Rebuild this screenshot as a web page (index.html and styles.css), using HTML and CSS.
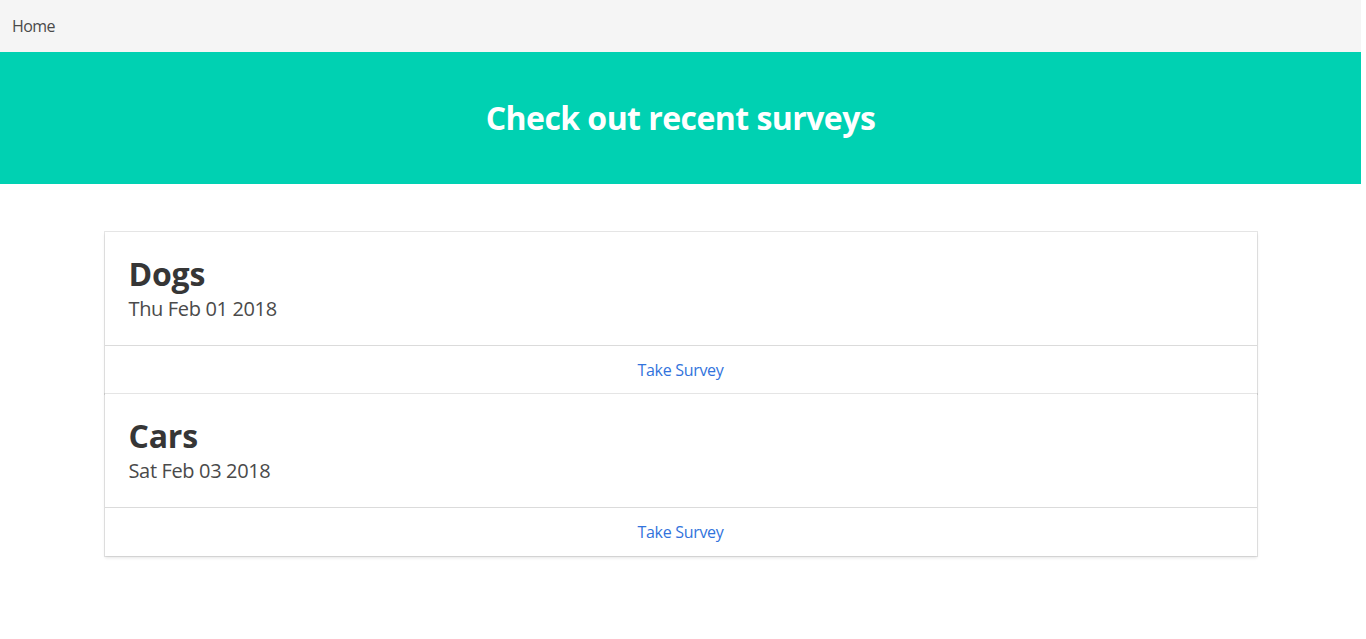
FILE: index.html
```html
<!DOCTYPE html>
<html lang="en">
<head>
<meta charset="utf-8">
<title>Surveys</title>
<link rel="stylesheet" href="styles.css">
</head>
<body>
<div class="page">
  <nav class="navbar">
    <a class="navbar-item" href="#">Home</a>
  </nav>
  <section class="hero">
    <h1 class="hero-title">Check out recent surveys</h1>
  </section>
  <section class="section">
    <div class="container">
      <div class="card">
        <div class="card-content">
          <h2 class="title">Dogs</h2>
          <p class="subtitle">Thu Feb 01 2018</p>
        </div>
        <footer class="card-footer">
          <a class="card-footer-item" href="#">Take Survey</a>
        </footer>
      </div>
      <div class="card">
        <div class="card-content">
          <h2 class="title">Cars</h2>
          <p class="subtitle">Sat Feb 03 2018</p>
        </div>
        <footer class="card-footer">
          <a class="card-footer-item" href="#">Take Survey</a>
        </footer>
      </div>
    </div>
  </section>
</div>
</body>
</html>
```
FILE: styles.css
```css
html, body {
  margin: 0;
  padding: 0;
  background: #fff;
}
body {
  font-family: "Open Sans", "Noto Sans", sans-serif;
  font-size: 16px;
  line-height: 1.5;
  color: #4a4a4a;
}
.page {
  margin-right: 5px;
}
a {
  text-decoration: none;
}
.navbar {
  display: flex;
  align-items: stretch;
  height: 52px;
  background: #f5f5f5;
}
.navbar-item {
  display: flex;
  align-items: center;
  padding: 0 12px;
  color: #4a4a4a;
  letter-spacing: -0.6px;
}
.hero {
  background: #00d1b2;
  padding: 48px 24px;
  text-align: center;
}
.hero-title {
  margin: 0;
  color: #fff;
  font-size: 32px;
  font-weight: 700;
  line-height: 1.125;
  letter-spacing: -0.55px;
}
.section {
  padding: 48px 24px;
}
.container {
  max-width: 1152px;
  margin: 0 auto;
}
.card {
  background: #fff;
  box-shadow: 0 2px 3px rgba(10, 10, 10, 0.1), 0 0 0 1px rgba(10, 10, 10, 0.1);
  position: relative;
}
.card-content {
  padding: 24px;
}
.title {
  margin: 0 0 4px;
  color: #363636;
  font-size: 32px;
  font-weight: 700;
  line-height: 1.125;
  letter-spacing: -0.2px;
}
.subtitle {
  margin: 0;
  color: #4a4a4a;
  font-size: 20px;
  font-weight: 400;
  line-height: 1.25;
  letter-spacing: -0.35px;
}
.card-footer {
  display: flex;
  border-top: 1px solid #dbdbdb;
}
.card-footer-item {
  flex: 1;
  display: flex;
  justify-content: center;
  padding: 12px;
  color: #3273dc;
  letter-spacing: -0.3px;
}
```
